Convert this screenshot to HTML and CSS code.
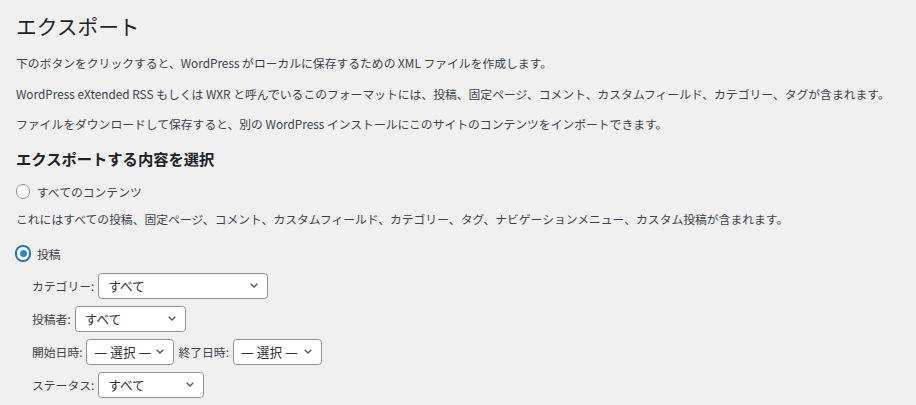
FILE: index.html
```html
<!DOCTYPE html>
<html lang="ja">
<head>
<meta charset="utf-8">
<title>エクスポート</title>
<link rel="stylesheet" href="styles.css">
</head>
<body>
<div class="wrap">
  <h1 class="title">エクスポート</h1>
  <p class="text">下のボタンをクリックすると、WordPress がローカルに保存するための XML ファイルを作成します。</p>
  <p class="text">WordPress eXtended RSS もしくは WXR と呼んでいるこのフォーマットには、投稿、固定ページ、コメント、カスタムフィールド、カテゴリー、タグが含まれます。</p>
  <p class="text">ファイルをダウンロードして保存すると、別の WordPress インストールにこのサイトのコンテンツをインポートできます。</p>
  <h2 class="subtitle">エクスポートする内容を選択</h2>
  <div class="radio-row first">
    <span class="radio"></span>
    <span class="radio-label">すべてのコンテンツ</span>
  </div>
  <p class="desc">これにはすべての投稿、固定ページ、コメント、カスタムフィールド、カテゴリー、タグ、ナビゲーションメニュー、カスタム投稿が含まれます。</p>
  <div class="radio-row second">
    <span class="radio checked"></span>
    <span class="radio-label">投稿</span>
  </div>
  <ul class="filters">
    <li class="filter">
      <span class="label">カテゴリー:</span>
      <span class="select w-cat"><span class="val">すべて</span><svg class="chev" viewBox="0 0 8 5" width="8" height="5"><path d="M0.7 0.7 L4 4 L7.3 0.7" fill="none" stroke="#50575e" stroke-width="1.3"/></svg></span>
    </li>
    <li class="filter">
      <span class="label">投稿者:</span>
      <span class="select w-author"><span class="val">すべて</span><svg class="chev" viewBox="0 0 8 5" width="8" height="5"><path d="M0.7 0.7 L4 4 L7.3 0.7" fill="none" stroke="#50575e" stroke-width="1.3"/></svg></span>
    </li>
    <li class="filter">
      <span class="label">開始日時:</span>
      <span class="select w-date"><span class="val tight">— 選択 —</span><svg class="chev" viewBox="0 0 8 5" width="8" height="5"><path d="M0.7 0.7 L4 4 L7.3 0.7" fill="none" stroke="#50575e" stroke-width="1.3"/></svg></span>
      <span class="label">終了日時:</span>
      <span class="select w-date2"><span class="val tight">— 選択 —</span><svg class="chev" viewBox="0 0 8 5" width="8" height="5"><path d="M0.7 0.7 L4 4 L7.3 0.7" fill="none" stroke="#50575e" stroke-width="1.3"/></svg></span>
    </li>
    <li class="filter">
      <span class="label">ステータス:</span>
      <span class="select w-status"><span class="val">すべて</span><svg class="chev" viewBox="0 0 8 5" width="8" height="5"><path d="M0.7 0.7 L4 4 L7.3 0.7" fill="none" stroke="#50575e" stroke-width="1.3"/></svg></span>
    </li>
  </ul>
</div>
</body>
</html>
```
FILE: styles.css
```css
html, body {
  margin: 0;
  padding: 0;
  background: #f0f0f1;
}
body {
  font-family: "Noto Sans CJK JP", "Noto Sans", sans-serif;
  color: #3c434a;
  font-size: 11.8px;
}
.wrap {
  padding: 12px 0 0 16px;
}
.title {
  margin: 0;
  font-size: 20.7px;
  font-weight: 400;
  line-height: 28px;
  color: #1d2327;
}
.text {
  margin: 12.5px 0 0;
  line-height: 18px;
}
.title + .text {
  margin-top: 14px;
}
.subtitle {
  margin: 14.5px 0 0;
  font-size: 15.3px;
  font-weight: 600;
  line-height: 20px;
  color: #1d2327;
}
.radio-row {
  display: flex;
  align-items: center;
  height: 18px;
}
.radio-row.first {
  margin-top: 15px;
}
.radio-row.second {
  margin-top: 17px;
}
.radio {
  box-sizing: border-box;
  width: 14.4px;
  height: 14.4px;
  border: 1px solid #8c8f94;
  border-radius: 50%;
  background: #fff;
  display: flex;
  align-items: center;
  justify-content: center;
  margin-right: 6.5px;
}
.radio.checked {
  border-color: #2271b1;
  box-shadow: 0 0 0 1px #2271b1;
}
.radio.checked::before {
  content: "";
  width: 7px;
  height: 7px;
  border-radius: 50%;
  background: #3582c4;
}
.radio-label {
  color: #3c434a;
}
.desc {
  margin: 9px 0 0;
  line-height: 18px;
}
.filters {
  list-style: none;
  margin: 10px 0 0;
  padding: 0 0 0 16px;
  display: flex;
  flex-direction: column;
  gap: 7px;
}
.filter {
  display: flex;
  align-items: center;
  gap: 4px;
}
.label {
  color: #3c434a;
}
.select {
  box-sizing: border-box;
  height: 26px;
  border: 1px solid #8c8f94;
  border-radius: 3.6px;
  background: #fff;
  display: flex;
  align-items: center;
  justify-content: space-between;
  padding: 0 9px 0 9px;
  color: #2c3338;
  font-size: 12.6px;
}
.val.tight {
  margin-left: -2px;
  white-space: nowrap;
  font-family: "Noto Sans", "Noto Sans CJK JP", sans-serif;
}
.chev {
  display: block;
  flex: none;
}
.w-cat { width: 170px; }
.w-author { width: 111px; }
.w-date { width: 88px; }
.w-date2 { width: 89px; }
.w-status { width: 106px; }
```
